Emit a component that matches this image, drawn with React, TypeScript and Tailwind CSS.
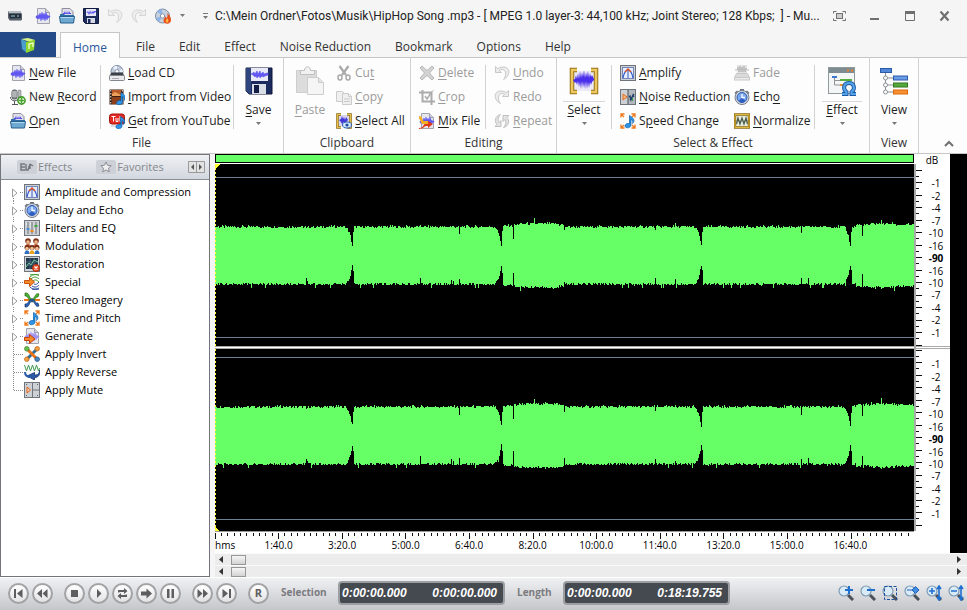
import { useState } from "react";
import type { ReactNode } from "react";
import clsx from "clsx";

type IconName = string;

const WAVE = "M1 8l3-1 1-2 1 2 1-3 1 3 1-2 1 2 1-3 1 3 2 1 1 0v1l-2 1-1 2-1-2-1 3-1-3-1 2-1-2-1 3-1-3-1 1-3-1z";

const Page = ({ wave = "#6058f0" }: { wave?: string }) => (
  <>
    <path d="M2.500.5h8l4 4v11h-12z" fill="#e6e6ee" stroke="#a2a2ae" />
    <path d="M10.500.5v4h4" fill="#cfcfda" stroke="#a2a2ae" />
    <path d={WAVE} fill={wave} stroke={wave} strokeWidth=".4" />
  </>
);

const Note = () => (
  <path
    d="M9.500 2.500v8.200c-2-.8-4.500.3-4.500 2.300 0 2.500 5.800 2.500 6-1V6.500c2 .7 2.200 2.200 1.500 4 3-3 1-5.500-3-8z"
    fill="#2d94e6"
    stroke="#0a5ca8"
    strokeWidth=".7"
  />
);

const Corners = () => (
  <path d="M1 4.500V1h3.500M1 1l3 3M11.500 1H15v3.500M15 1l-3 3M1 11.500V15h3.500M1 15l3-3M15 11.500V15h-3.500M15 15l-3-3" fill="none" stroke="#f07818" strokeWidth="1.300" />
);

const Frame = ({ children }: { children?: ReactNode }) => (
  <>
    <rect x=".5" y=".5" width="15" height="15" fill="#cdd1d6" stroke="#6f747c" />
    {children}
  </>
);

const ICONS: Record<IconName, ReactNode> = {
  drive: (
    <>
      <path d="M1 3h12l2 3v6l-12 1-2-3z" fill="#59616b" />
      <path d="M1 3h12l1 2H2z" fill="#b6bec6" />
      <path d="M2 6h12v4l-11 .5z" fill="#27303b" />
      <path d="M4 8h4M10 8h2" stroke="#8fd0e0" />
      <path d="M3 12.500h11" stroke="#9aa3ab" />
    </>
  ),
  newFile: <Page />,
  record: (
    <>
      <rect x="2" y="1" width="5" height="9" rx="2" fill="#8b8f92" stroke="#55595c" />
      <path d="M2 3h5M2 5h5M2 7h5" stroke="#d7d9da" />
      <path d="M.500 8c0 5 8 5 8 0M4.500 12v3M2 15.500h6" fill="none" stroke="#55595c" />
      <rect x="8" y="1" width="3" height="7" rx="1" fill="#b8bbbd" stroke="#77797b" strokeWidth=".6" />
      <circle cx="11.500" cy="11.500" r="3.600" fill="#fff" stroke="#3f9a24" strokeWidth="1.600" />
      <path d="M11.500 9v5M9 11.500h5" stroke="#4aa52c" strokeWidth="1.700" />
    </>
  ),
  open: (
    <>
      <path d="M3 .5h8l3 3v7H3z" fill="#dedee8" stroke="#8e8e9c" />
      <path d="M4 5h1l1-2 1 3 1-3 1 3 1-3 1 2h1v1H4z" fill="#4f46f0" />
      <path d="M1 6h4l1 1h9v4H1z" fill="#2f6fa6" />
      <path d="M.5 8.500h15l-1 6.500h-13z" fill="#6ea9d2" stroke="#255d8c" />
      <path d="M1.500 9.500h13" stroke="#b4daf0" />
    </>
  ),
  save: (
    <>
      <path d="M.500.500h15v15h-13l-2-2z" fill="#1d2c5e" stroke="#111a3c" />
      <rect x="3" y="1" width="10" height="7" fill="#e6e6f4" />
      <path d="M3 4h1l1-1 1 2 1-3 1 3 1-2 1 1 1-1h2v1l-2 1-1 1-1-1-1 1-1-1-1 2-1-2-2-1z" fill="#6058f0" />
      <rect x="4" y="10" width="8" height="5" fill="#d6dae4" />
      <rect x="5" y="11" width="2.500" height="4" fill="#1d2c5e" />
    </>
  ),
  undo: <path d="M1.500 1.500v6h6L5.300 5.300c4-2.300 7.700.7 5.700 6.700-.3 1-.8 1.800-1.500 2.500 7-3.500 7.500-13-1-12.500-2 .1-3.600.8-4.900 1.600z" fill="#ececec" stroke="#c3c3c3" strokeWidth=".9" />,
  redo: <path d="M14.500 1.500v6h-6l2.200-2.200C6.700 3 3 6 5 12c.3 1 .8 1.800 1.500 2.500C-.5 11-1 1.500 7.500 2c2 .1 3.600.8 4.900 1.600z" fill="#ececec" stroke="#c3c3c3" strokeWidth=".9" />,
  repeat: (
    <g fill="#e4e4e4" stroke="#b9b9b9" strokeWidth=".9">
      <path d="M6.500 1.500C.5 3 .5 9 3 11.500l-2 2h6v-6l-2 2C3.500 7 4 4.500 6.500 1.500z" />
      <path d="M9.500 14.500c6-1.500 6-7.500 3.500-10l2-2H9v6l2-2c1.500 2.500 1 5-1.500 8z" />
    </g>
  ),
  burn: (
    <>
      <circle cx="7.500" cy="8" r="7" fill="#c8d2de" stroke="#7e8da0" />
      <path d="M7.500 8L2 3.500A7 7 0 017 1zM7.500 8L4 14a7 7 0 01-3-4z" fill="#8fb4ea" />
      <circle cx="7.500" cy="8" r="2.200" fill="#fff" stroke="#8390a2" />
      <path d="M12 5c3 2 4 5 4 7 0 5-7.500 5-7.500.5 0-2 1.500-2 1.500-4 1 .5 1.500 1 1.500 2C12.500 9 13 7.500 12 5z" fill="#e8501c" />
      <path d="M12.300 10c1.500 2 1.500 4.500-.3 4.500-1.500 0-1.800-2 .3-4.500z" fill="#ffb545" />
    </>
  ),
  loadCd: (
    <>
      <circle cx="8" cy="6.500" r="6" fill="#c2cbdc" stroke="#7987a0" />
      <path d="M8 7L4 2.500A6 6 0 018 .8zM8 7l5-3a6 6 0 011 3z" fill="#e9f2ff" />
      <circle cx="8" cy="6.500" r="2" fill="#fff" stroke="#8793a8" />
      <path d="M2.500 7.500h11l2 3.500H.5z" fill="#3c4048" />
      <rect x=".5" y="10.500" width="15" height="5" rx="1" fill="#e9e9ec" stroke="#83878e" />
      <path d="M3 13.500h7" stroke="#a9acb2" />
    </>
  ),
  video: (
    <>
      <rect x=".5" y=".5" width="14" height="15" fill="#3a1e10" />
      <rect x="3" y="1" width="9" height="6" fill="#b85a28" />
      <rect x="3" y="8" width="9" height="7" fill="#8c3f1a" />
      <path d="M1.800 1v14M13.300 1v14" stroke="#eee" strokeDasharray="1.500 1.500" />
      <path d="M3 5l3-2 6 3v1H3z" fill="#eaa05a" />
      <g transform="translate(2.500 1)"><Note /></g>
    </>
  ),
  youtube: (
    <>
      <rect x=".5" y="1" width="15" height="10" rx="2.500" fill="#e02a22" stroke="#a81610" />
      <path d="M2.500 3.500h4M4.500 3.500v5M7 5v3.500h2V5M11 3v5.500h2V5.500h-2" fill="none" stroke="#fff" />
      <path d="M2 12h10v2H2z" fill="#dcdce6" />
      <g transform="translate(2 1)"><Note /></g>
    </>
  ),
  cut: (
    <g fill="none" stroke="#a9a9a9">
      <path d="M3.500 1L10 10M12.500 1L6 10" strokeWidth="2.200" />
      <ellipse cx="4" cy="12.500" rx="2" ry="2.500" strokeWidth="1.500" />
      <ellipse cx="12" cy="12.500" rx="2" ry="2.500" strokeWidth="1.500" />
    </g>
  ),
  copy: (
    <g fill="#efefef" stroke="#cbcbcb">
      <path d="M.5 2.500h6l3 3v7h-9z" />
      <path d="M6.500 4.500h6l3 3v8h-9zM12.500 4.500v3h3" />
      <path d="M8 10h6M8 12.500h6" />
    </g>
  ),
  selectAll: (
    <>
      <rect x="3" y="2" width="10" height="11" fill="#d5d5ee" />
      <path d="M5 1.500H1.500v13H5M11 1.500h3.500v13H11" fill="none" stroke="#8c6a14" strokeWidth="2.600" />
      <path d="M5 1.500H1.500v13H5M11 1.500h3.500v13H11" fill="none" stroke="#e6c04c" strokeWidth="1.200" />
      <path d="M3 7l2-1 1-3 1 3 1-2 1 3 1-3 2 3-2 2-1 2-1-2-2 2-1-2z" fill="#4336d8" />
      <ellipse cx="11" cy="12" rx="4.500" ry="3" fill="#d4e6ff" stroke="#2b5fae" />
      <circle cx="11" cy="12" r="1.600" fill="#1c4d9c" />
    </>
  ),
  del: (
    <path d="M3 1l5 4.500L13 1l2 2-4.500 5 4.500 5-2 2-5-4.500L3 15l-2-2 4.500-5L1 3z" fill="#d2d2d2" stroke="#b9b9b9" />
  ),
  crop: (
    <g fill="none" stroke="#ababab">
      <path d="M3.500 1v11.500H16M0 3.500h12.500V16" strokeWidth="2" />
      <path d="M6 7l2 3 4-6" strokeWidth="1.500" />
      <path d="M10 5l5-4" strokeWidth=".7" />
    </g>
  ),
  mix: (
    <>
      <Page />
      <path d="M0 3c4 0 3 5 5 5h4v3H4C1 11 2 6 0 6z" fill="#f4b020" />
      <path d="M0 15c5 0 4-4 6-4h3V8l5 3-5 4v-2H7c-2 0-2 3-7 3z" fill="#e03a1c" />
    </>
  ),
  amplify: (
    <Frame>
      <rect x="2.500" y="2.500" width="11" height="11" fill="#e5edff" stroke="#7285bc" />
      <path d="M3 13c1-5 3-8 5-8 3 0 4 3 5 8" fill="none" stroke="#2f55c8" strokeWidth="1.200" />
      <path d="M8 13V5" stroke="#3d5bb0" />
      <path d="M5 7l3-3 3 3" fill="none" stroke="#e0521c" strokeWidth="1.400" />
    </Frame>
  ),
  noise: (
    <Frame>
      <rect x="8" y="1" width="7" height="14" fill="#b3b8bf" />
      <path d="M8 1v14" stroke="#4b4f56" />
      <path d="M3 5l4 3-4 3z" fill="#f5ba80" stroke="#e26b1a" />
      <path d="M9 8l1-1 1 4 2-5 1 2M10 11l4-6" fill="none" stroke="#1b3a66" strokeWidth="1.200" />
      <path d="M12.500 9v3" stroke="#3aa23a" />
    </Frame>
  ),
  speed: (
    <>
      <Corners />
      <Note />
    </>
  ),
  fade: (
    <>
      <rect x="3" y="0" width="10" height="8" fill="#e3e3e3" />
      <path d="M1 5h2l1-3 1 5 1-6 1 6 1-5 1 5 1-6 1 6 1-4 1 2h2" fill="none" stroke="#bcbcbc" />
      <path d="M2.500 8.500h11l2 4H.5z" fill="#dadada" stroke="#c9c9c9" />
      <rect x=".5" y="12.500" width="15" height="2.500" fill="#ececec" stroke="#c9c9c9" />
    </>
  ),
  echo: (
    <>
      <rect x="6" y="0" width="4" height="2" fill="#70757d" />
      <path d="M1 4.500l2.500-2.500M15 4.500L12.500 2" stroke="#646b78" strokeWidth="1.500" />
      <circle cx="8" cy="8.500" r="7" fill="#d7dce4" stroke="#747b88" />
      <circle cx="8" cy="8.500" r="5" fill="#7aa8f0" stroke="#2c55ac" />
      <path d="M4.500 12a5 5 0 007 0L8 8.500z" fill="#2f5fc4" />
      <path d="M8 5v3.500h3" fill="none" stroke="#fff" strokeWidth="1.300" />
    </>
  ),
  normalize: (
    <>
      <path d="M1 1.500h14v13H1z" fill="#e9edda" stroke="#8c6a14" strokeWidth="2.400" />
      <path d="M1 1.500h14v13H1z" fill="none" stroke="#dfb93c" />
      <path d="M0 8h16" stroke="#8c6a14" strokeWidth=".5" />
      <path d="M2.500 11l1.500-6 2 6 2-6 2 6 2-6 1.500 6" fill="none" stroke="#465b54" strokeWidth="1.200" />
    </>
  ),
  filters: (
    <Frame>
      <path d="M4 2v12M8 2v12M12 2v12" stroke="#6b7078" />
      <rect x="2.500" y="8" width="3" height="2" fill="#4e8fd8" />
      <rect x="6.500" y="10" width="3" height="2" fill="#f08a1c" />
      <rect x="10.500" y="5" width="3" height="2" fill="#3fa63c" />
      <path d="M2 4h1M6 4h1M6 7h1M10 10h1" stroke="#fff" />
    </Frame>
  ),
  modulation: (
    <>
      {[3.500, 11.500].map((x) => (
        <g key={x}>
          <circle cx={x + 0.5} cy="3" r="2.800" fill="#7c3318" />
          <circle cx={x + 0.5} cy="4" r="1.800" fill="#f0b58a" />
          <path d={`M${x - 2.5} 9c0-4 6-4 6 0z`} fill="#c8542a" />
        </g>
      ))}
      {[3, 8, 13].map((x) => (
        <g key={x}>
          <circle cx={x} cy="9.500" r="2.500" fill="#6f2c12" />
          <circle cx={x} cy="10.500" r="1.700" fill="#f6c197" />
          <path d={`M${x - 2.5} 16c0-5 5-5 5 0z`} fill={x === 8 ? "#f0a21c" : "#2d6fbe"} />
        </g>
      ))}
    </>
  ),
  restoration: (
    <Frame>
      <rect x="2" y="2" width="12" height="11" fill="#24384c" />
      <path d="M2 11l3-4 2 2 3-5 4 2" fill="none" stroke="#6fd08a" />
      <path d="M2 6h12M2 9h12M6 2v11M10 2v11" stroke="#6e95b8" strokeWidth=".4" />
      <circle cx="12" cy="12" r="3.500" fill="#e8562a" stroke="#b22d0c" />
      <path d="M10.500 10.500l3 3M13.500 10.500l-3 3" stroke="#fff" strokeWidth="1.200" />
    </Frame>
  ),
  special: (
    <>
      <path d="M6 3c3-3 7-3 9-1M7 5c3-3 6-2 8 0M9 7c2-2 4-1 6 1M6 1c4-1 7-1 9 0" fill="none" stroke="#3f9a30" />
      <path d="M6 13c3 3 7 2 9 1M8 12c3 2 5 1 7-1M10 10c2 1 3 0 5-2M8 15c3 1 5 1 7 0" fill="none" stroke="#2b4a9c" />
      <path d="M.5 6.500h5V3.500L10.500 8l-5 4.500v-3h-5z" fill="#f58a2a" stroke="#c6500c" />
    </>
  ),
  stereo: (
    <>
      <path d="M0 8h16" stroke="#f07818" strokeWidth="2" />
      <path d="M1 1c5-1 4 6 7 6s3-7 7-5l-1 3c-3-1-3 5-6 5S4 3 1 4z" fill="#4db032" stroke="#226d12" strokeWidth=".7" />
      <path d="M1 15c5 1 4-6 7-6s3 7 7 5l-1-3c-3 1-3-4-6-4s-4 6-7 5z" fill="#2c62b4" stroke="#12366f" strokeWidth=".7" />
    </>
  ),
  generate: (
    <>
      <Page wave="#9f90f0" />
      <path d="M.5 9.500h5v-3l5.500 4.500-5.500 4.500v-3h-5z" fill="#f58a2a" stroke="#c6420c" />
    </>
  ),
  invert: (
    <>
      <path d="M3 13L13 3" stroke="#2d6e9c" strokeWidth="3" />
      <path d="M3 3l10 10" stroke="#e8741a" strokeWidth="3" />
      <circle cx="2.800" cy="2.800" r="2.300" fill="#6cc050" stroke="#35802a" strokeWidth=".7" />
      <circle cx="13.200" cy="2.800" r="2.300" fill="#f0a040" stroke="#c0600c" strokeWidth=".7" />
      <circle cx="2.800" cy="13.200" r="2.300" fill="#f0a040" stroke="#c0600c" strokeWidth=".7" />
      <circle cx="13.200" cy="13.200" r="2.300" fill="#4a88c0" stroke="#1c4d7c" strokeWidth=".7" />
    </>
  ),
  reverse: (
    <>
      <path d="M.5 1l2 6 2-6 2 6 2-6 2 6 2-6 2 6 1-3" fill="none" stroke="#3f9a50" />
      <path d="M15.500 6c0 4-2 5-5 5V8.500L3 12l7.500 4v-2.500c4 0 6-3 5-7.500z" fill="#2c5aa8" stroke="#14346e" strokeWidth=".8" />
      <path d="M1 8c0 3 2 5 6 5" fill="none" stroke="#2c5aa8" strokeWidth="2" />
    </>
  ),
  mute: (
    <Frame>
      <path d="M8.500 1v14M8.500 8H15" stroke="#6f747c" />
      <path d="M3 5l3.500 3L3 11z" fill="#f9d0ac" stroke="#e0601a" />
      <path d="M2 2.500h1M13 2.500h1M2 13.500h1M13 13.500h1" stroke="#5f646c" />
    </Frame>
  ),
};

function Icon({ name }: { name: IconName }) {
  return (
    <svg className="size-4 shrink-0" viewBox="0 0 16 16" aria-hidden="true">
      {ICONS[name]}
    </svg>
  );
}

const BIG_WAVE = "M4 15l2-1 1-4 1 4 1-6 1 6 1-8 1 7 1-6 1 5 1-7 1 8 1-6 1 5 1-6 1 7 1-5 1 4 1-2 2 4v1l-2 2-1 3-1-3-1 6-1-6-1 7-1-8-1 8-1-7-1 6-1-7-1 8-1-7-1 5-1-6-1 4-1-3-1 1z";

const BIG_ICONS: Record<string, ReactNode> = {
  save: (
    <>
      <path d="M2 3h26v26H5l-3-3z" fill="#1b2b60" stroke="#0e1738" />
      <path d="M2 3h5v26H5l-3-3z" fill="#2f457e" />
      <rect x="7" y="3" width="17" height="13" fill="#e8e8f6" />
      <path d="M7 9l2-1 1-1 1 2 2-3 1 3 2-3 1 3 2-2 1 2 3-1h1v2l-3 1-2 1-1-1-2 2-1-2-2 2-1-2-1 1-2-2-2-1z" fill="#6058f0" stroke="#6058f0" strokeWidth=".6" />
      <rect x="8" y="19" width="14" height="10" fill="#d9dde6" />
      <rect x="10" y="20" width="5" height="8" fill="#141e44" />
    </>
  ),
  paste: (
    <g stroke="#cdcdcd">
      <path d="M1.500 5.500h20v22h-20z" fill="#dcdcdc" />
      <path d="M5.500 9.500v-4h4c0-5 6-5 6 0h4v4z" fill="#f1f1f1" stroke="#c0c0c0" />
      <path d="M12.500 12.500h11l5 5v12h-16z" fill="#f5f5f5" />
      <path d="M23.500 12.500v5h5" fill="#e2e2e2" />
    </g>
  ),
  select: (
    <>
      <rect x="5" y="6" width="20" height="20" fill="#eceaf6" />
      <path d="M8 5H3v22h5M22 5h5v22h-5" fill="none" stroke="#98721a" strokeWidth="4.500" />
      <path d="M8 5H3v22h5M22 5h5v22h-5" fill="none" stroke="#edc860" strokeWidth="2.500" />
      <path d={BIG_WAVE} fill="#4a2eec" />
    </>
  ),
  effect: (
    <>
      <rect x="1.500" y="2.500" width="26" height="26" fill="#f4f6f6" stroke="#8e9a9c" />
      <path d="M2 3h25v5H2z" fill="#7d8c90" />
      <path d="M20 4.500h2v2h-2zM24 4.500h2v2h-2z" fill="#f08030" />
      <rect x="5" y="11" width="5" height="2" fill="#3c78d0" />
      <path d="M7.500 13v7H13M7.500 15.500H13" fill="none" stroke="#8d9496" />
      <path d="M13 14h12v2H13z" fill="#58ae3e" />
      <path d="M13 19h5v2h-5z" fill="#ef9030" />
      <path d="M15 29h4.500v-2c-4-3-3-9 2.500-9s6.500 6 2.500 9v2H29" fill="none" stroke="#1d5aa8" strokeWidth="4" />
      <path d="M15 29h4.500v-2c-4-3-3-9 2.500-9s6.500 6 2.500 9v2H29" fill="none" stroke="#55a4e8" strokeWidth="2" />
    </>
  ),
  view: (
    <>
      <path d="M6.500 8v19M6.500 13H14M6.500 20H14M6.500 27H14" fill="none" stroke="#8b9094" />
      <rect x="1.500" y="3.500" width="11" height="4" fill="#5187d8" stroke="#2c5ca8" />
      <rect x="14.500" y="11" width="14" height="4" fill="#6a9ce8" stroke="#2c5ca8" />
      <rect x="14.500" y="18" width="14" height="4" fill="#57a83c" stroke="#2f761c" />
      <rect x="14.500" y="25" width="14" height="4" fill="#f89030" stroke="#d8680c" />
      {[13, 20, 27].map((y) => (
        <circle key={y} cx="6.500" cy={y} r="2" fill="#fff" stroke="#8b9094" />
      ))}
    </>
  ),
};

// "&" marks the access key that follows it
function Caption({ text }: { text: string }) {
  const at = text.indexOf("&");
  if (at < 0) return <span>{text}</span>;
  return (
    <span className="whitespace-pre">
      {text.slice(0, at)}
      <span className="underline underline-offset-2">{text[at + 1]}</span>
      {text.slice(at + 2)}
    </span>
  );
}

interface Command {
  icon: IconName;
  text: string;
  disabled?: boolean;
}

function Commands({ items, className }: { items: Command[]; className: string }) {
  return (
    <div className={clsx("flex flex-col shrink-0", className)}>
      {items.map((c) => (
        <button
          key={c.text}
          disabled={c.disabled}
          className={clsx(
            "flex h-6 items-center gap-[3px] whitespace-nowrap",
            c.disabled ? "text-[#9b9b9b]" : "text-[#1e1e1e]"
          )}
        >
          <Icon name={c.icon} />
          <Caption text={c.text} />
        </button>
      ))}
    </div>
  );
}

interface BigProps {
  icon: string;
  text: string;
  disabled?: boolean;
  menu?: boolean;
  split?: boolean;
  className: string;
}

function BigCommand({ icon, text, disabled, menu, split, className }: BigProps) {
  return (
    <button
      disabled={disabled}
      className={clsx("flex shrink-0 flex-col items-center", disabled ? "text-[#9b9b9b]" : "text-[#1e1e1e]", className)}
    >
      <svg className="mt-1 h-8 w-[30px]" viewBox="0 0 30 32" aria-hidden="true">
        {BIG_ICONS[icon]}
      </svg>
      <span className={clsx("mt-1 border-t px-1 leading-4", split ? "border-[#d8d8d8]" : "border-transparent")}>
        <Caption text={text} />
      </span>
      {menu && <Caret />}
    </button>
  );
}

function Caret() {
  return (
    <svg className="mt-1 h-1 w-[7px]" viewBox="0 0 7 4" aria-hidden="true">
      <path d="M1 0h5L3.500 3z" fill="#777" />
    </svg>
  );
}

const Divider = () => <div className="my-1 w-px shrink-0 bg-[#d2d2d2]" />;

function Group({ title, children }: { title: string; children: ReactNode }) {
  return (
    <section className="flex shrink-0 flex-col border-r border-[#d2d2d2] pt-[3px]">
      <div className="flex h-[72px] shrink-0">{children}</div>
      <h2 className="text-center leading-5 text-[#333]">{title}</h2>
    </section>
  );
}

const TABS = ["File", "Edit", "Effect", "Noise Reduction", "Bookmark", "Options", "Help"];

function TitleBar() {
  return (
    <header className="flex h-8 shrink-0 items-center pr-[5px]">
      <div className="flex shrink-0 items-center pl-[7px]">
        <Icon name="drive" />
        <div className="ml-3 flex gap-2">
          {["newFile", "open", "save", "undo", "redo", "burn"].map((name) => (
            <button key={name} aria-label={name} className={clsx((name === "undo" || name === "redo") && "opacity-70")}>
              <Icon name={name} />
            </button>
          ))}
        </div>
        <button aria-label="Burn options" className="ml-2 pb-1">
          <Caret />
        </button>
        <button aria-label="Customize toolbar" className="ml-4">
          <svg className="h-2 w-[7px]" viewBox="0 0 7 8">
            <path d="M1 1.500h5" stroke="#777" />
            <path d="M1 4h5L3.500 7z" fill="#777" />
          </svg>
        </button>
      </div>
      <h1 className="ml-1.5 min-w-0 flex-1 overflow-hidden font-['Roboto','Open_Sans',sans-serif] whitespace-pre text-[#222]">
        {"C:\\Mein Ordner\\Fotos\\Musik\\HipHop Song .mp3 - [ MPEG 1.0 layer-3: 44,100 kHz; Joint Stereo; 128 Kbps;  ] - Mu..."}
      </h1>
      <div className="flex shrink-0">
        <WindowButton label="Full screen">
          <path d="M.5 3.500v-2h3M9.500 1.500h3v2M12.500 8.500v2h-3M3.500 10.500h-3v-2" />
          <rect x="3.500" y="3.500" width="6" height="5" fill="#ccc" />
        </WindowButton>
        <WindowButton label="Minimize">
          <path d="M2 9h9" strokeWidth="2" />
        </WindowButton>
        <WindowButton label="Maximize">
          <path d="M2.500 2.500h9v8h-9z" />
          <path d="M2 2.500h10" strokeWidth="3" />
        </WindowButton>
        <WindowButton label="Close">
          <path d="M2.500 1.500l8 9M10.500 1.500l-8 9" strokeWidth="2.200" />
        </WindowButton>
      </div>
    </header>
  );
}

function WindowButton({ label, children }: { label: string; children: ReactNode }) {
  return (
    <button aria-label={label} className="flex w-[35px] justify-center">
      <svg className="h-3 w-[13px]" viewBox="0 0 13 12" fill="none" stroke="#6f6f6f">
        {children}
      </svg>
    </button>
  );
}

function Ribbon() {
  return (
    <div className="flex h-24 shrink-0 overflow-hidden border-b border-[#c6c6c6] bg-[#fdfdfd]">
      <Group title="File">
        <Commands
          className="w-[100px] pl-2.5"
          items={[
            { icon: "newFile", text: "&New File" },
            { icon: "record", text: "New &Record" },
            { icon: "open", text: "&Open" },
          ]}
        />
        <Divider />
        <Commands
          className="w-[132px] pl-2"
          items={[
            { icon: "loadCd", text: "&Load CD" },
            { icon: "video", text: "&Import from Video" },
            { icon: "youtube", text: "&Get from YouTube" },
          ]}
        />
        <Divider />
        <BigCommand className="w-[49px]" icon="save" text="&Save" menu />
      </Group>
      <Group title="Clipboard">
        <BigCommand className="w-[52px]" icon="paste" text="&Paste" disabled />
        <Commands
          className="w-[74px]"
          items={[
            { icon: "cut", text: "Cu&t", disabled: true },
            { icon: "copy", text: "&Copy", disabled: true },
            { icon: "selectAll", text: "&Select All" },
          ]}
        />
      </Group>
      <Group title="Editing">
        <Commands
          className="w-[74px] pl-2"
          items={[
            { icon: "del", text: "&Delete", disabled: true },
            { icon: "crop", text: "&Crop", disabled: true },
            { icon: "mix", text: "&Mix File" },
          ]}
        />
        <Divider />
        <Commands
          className="w-[70px] pl-2"
          items={[
            { icon: "undo", text: "&Undo", disabled: true },
            { icon: "redo", text: "Redo", disabled: true },
            { icon: "repeat", text: "&Repeat", disabled: true },
          ]}
        />
      </Group>
      <Group title="Select & Effect">
        <BigCommand className="w-[54px]" icon="select" text="&Select" menu split />
        <Divider />
        <Commands
          className="w-[122px] pl-2"
          items={[
            { icon: "amplify", text: "&Amplify" },
            { icon: "noise", text: "&Noise Reduction" },
            { icon: "speed", text: "S&peed Change" },
          ]}
        />
        <Commands
          className="w-20"
          items={[
            { icon: "fade", text: "Fade", disabled: true },
            { icon: "echo", text: "Ech&o" },
            { icon: "normalize", text: "&Normalize" },
          ]}
        />
        <Divider />
        <BigCommand className="w-[54px]" icon="effect" text="&Effect" menu split />
      </Group>
      <Group title="View">
        <BigCommand className="w-12" icon="view" text="View" menu />
      </Group>
      <button aria-label="Collapse ribbon" className="mr-3 mb-1.5 ml-auto self-end">
        <svg className="h-2 w-3" viewBox="0 0 12 8" fill="none" stroke="#6f6f6f" strokeWidth="2">
          <path d="M2 7l4-4 4 4" />
        </svg>
      </button>
    </div>
  );
}

const TREE = [
  { icon: "amplify", text: "Amplitude and Compression", open: true },
  { icon: "echo", text: "Delay and Echo", open: true },
  { icon: "filters", text: "Filters and EQ", open: true },
  { icon: "modulation", text: "Modulation", open: true },
  { icon: "restoration", text: "Restoration", open: true },
  { icon: "special", text: "Special", open: true },
  { icon: "stereo", text: "Stereo Imagery", open: true },
  { icon: "speed", text: "Time and Pitch", open: true },
  { icon: "generate", text: "Generate", open: true },
  { icon: "invert", text: "Apply Invert", open: false },
  { icon: "reverse", text: "Apply Reverse", open: false },
  { icon: "mute", text: "Apply Mute", open: false },
];

function Sidebar() {
  return (
    <aside className="flex w-[210px] shrink-0 flex-col border border-[#74747a] bg-white text-[11px]">
      <div className="flex h-[25px] shrink-0 items-center border-b border-[#8a8d96] bg-gradient-to-b from-[#eef0f3] to-[#d3d7df] pr-1 pl-4 text-[#85878c]">
        <button className="flex items-center gap-px">
          <svg className="h-3.5 w-5 rounded-xs bg-[#cdd0d6]" viewBox="0 0 20 14" fill="none" stroke="#74777d" strokeWidth="1.500">
            <path d="M8 4H4v6h4M4 7h4M9 4v6h2l2-6v5M13 4l3 2" />
          </svg>
          Effects
        </button>
        <button className="ml-6 flex items-center gap-px">
          <svg className="h-3.5 w-5 rounded-xs bg-[#cdd0d6]" viewBox="0 0 20 14">
            <path d="M10 2l1.600 3.300 3.600.4-2.700 2.500.8 3.600L10 10l-3.300 1.800.8-3.600-2.700-2.500 3.600-.4z" fill="#eee" stroke="#8b8e94" />
          </svg>
          Favorites
        </button>
        <button aria-label="Scroll tabs" className="ml-auto">
          <svg className="h-3 w-[17px]" viewBox="0 0 17 12">
            <path d="M.5.5h16v11H.5zM8.500 0v12" fill="#e3e3e3" stroke="#9a9a9a" />
            <path d="M6 3v6L3 6zM11 3v6l3-3z" fill="#555" />
          </svg>
        </button>
      </div>
      <ul className="pt-[3px] text-black">
        {TREE.map((node, i) => (
          <li key={node.text}>
            <button className="flex h-[18px] w-full items-center pl-[9px] whitespace-nowrap">
              <svg className="h-[18px] w-3.5 shrink-0" viewBox="0 0 14 18" aria-hidden="true">
                <path
                  d={`M3.500 ${i === 0 ? 9 : 0}V${i === TREE.length - 1 ? 9 : 18}M4 9.500h10`}
                  stroke="#8a8a8a"
                  strokeDasharray="1 1"
                />
                {node.open && (
                  <>
                    <path d="M1 4h9v11H1z" fill="#fff" />
                    <path d="M2.500 6v8L7 10z" fill="#fff" stroke="#9c9c9c" />
                  </>
                )}
              </svg>
              <Icon name={node.icon} />
              <span className="ml-[5px]">{node.text}</span>
            </button>
          </li>
        ))}
      </ul>
    </aside>
  );
}

const COLS = 699;
const FADES = [137, 286, 486, 635];
// column, cut from the upper edge, cut from the lower edge
const DROPS: [number, number, number][] = [
  [91, 2, 5],
  [92, 1, 3],
  [205, 0, 7],
  [236, 0, 5],
  [238, 0, 4],
  [244, 8, 5],
  [298, 13, 13],
  [319, -5, 0],
  [349, 4, 6],
  [440, 4, 5],
  [460, -3, 4],
  [586, 8, 6],
  [593, 0, 7],
  [647, 12, 11],
  [666, -5, -3],
];

function noise(n: number) {
  const v = Math.sin(n * 12.9898) * 43758.5453;
  return v - Math.floor(v);
}

function swellAt(x: number) {
  if (x > 298 && x < 349) return 2 + 1.5 * Math.sin(((x - 298) / 51) * Math.PI);
  if (x > 286 && x <= 298) return 1;
  if (x > 640) return x > 655 && x < 680 ? 3 : 2;
  return 0;
}

// one step per column: upper edge left to right, lower edge back again
function wavePath(seed: number) {
  const top: number[] = [];
  const bottom: number[] = [];
  for (let x = 0; x < COLS; x++) {
    const swell = swellAt(x);
    const a = noise(x + seed);
    const b = noise(x * 1.7 + seed + 90);
    let up = 28 + swell + Math.round(a * 2.4) + (a > 0.95 ? 1 : 0);
    let down = 27 + swell + Math.round(b * 2.6) + (b > 0.97 ? 2 : 0);
    for (const f of FADES) {
      const d = f - x;
      if (d >= 0 && d < 7) {
        const cut = [19, 14, 9, 6, 4, 2, 1][d];
        up -= cut;
        down -= cut;
      } else if (d === -1) {
        up -= 6;
        down -= 14;
      }
    }
    for (const [at, u, l] of DROPS) {
      if (at === x) {
        up -= u;
        down -= l;
      }
    }
    top.push(Math.round(92 - up));
    bottom.push(Math.round(92 + down));
  }
  let d = `M0 ${top[0]}`;
  top.forEach((y, x) => (d += `V${y}H${x + 1}`));
  for (let x = COLS - 1; x >= 0; x--) d += `V${bottom[x]}H${x}`;
  return d + "Z";
}

const CHANNELS = [wavePath(3), wavePath(57)];
const DB = ["-1", "-2", "-4", "-7", "-10", "-16", "-90", "-16", "-10", "-7", "-4", "-2", "-1"];
const TIMES = ["1:40.0", "3:20.0", "5:00.0", "6:40.0", "8:20.0", "10:00.0", "11:40.0", "13:20.0", "15:00.0", "16:40.0"];

function Channel({ path, flip }: { path: string; flip?: boolean }) {
  return (
    <svg className="min-h-0 w-full flex-1 bg-black" viewBox="0 0 699 182" preserveAspectRatio="none" shapeRendering="crispEdges">
      <path d={flip ? "M0 8.500h699M0 170.500h699" : "M0 13.500h699M0 173.500h699"} stroke="#6c7f92" />
      <path d={path} fill="#66ff66" transform={flip ? "translate(0 -5)" : undefined} />
      <path d="M.5 0v182" stroke="#ffff30" strokeDasharray="2 2" />
      <path d={flip ? "M0 178v4h5z" : "M0 0h5l-5 5z"} fill="#ffff30" />
    </svg>
  );
}

function DbScale({ second }: { second?: boolean }) {
  return (
    <div className="flex min-h-0 flex-1">
      <svg className="h-full w-2" viewBox="0 0 8 182" preserveAspectRatio="none" shapeRendering="crispEdges" stroke="#111">
        {Array.from({ length: 29 }, (_, i) => {
          const y = Math.floor((second ? 1 : 6) + i * 6.25) + 0.5;
          return <path key={i} d={`M0 ${y}h${i % 2 ? 3 : 6}`} />;
        })}
      </svg>
      <div className={clsx("flex min-h-0 w-6 flex-col text-center text-[10px] leading-3", second ? "pt-[9px] pb-[11px]" : "pt-[13px] pb-[7px]")}>
        {DB.map((v, i) => (
          <span key={i} className={clsx("flex min-h-0 flex-1 items-center justify-center", v === "-90" && "font-bold")}>
            {v}
          </span>
        ))}
      </div>
    </div>
  );
}

function Ticks() {
  return (
    <svg className="h-[7px] w-full" viewBox="0 0 699 7" preserveAspectRatio="none" shapeRendering="crispEdges" stroke="#111">
      {Array.from({ length: 110 }, (_, i) => (
        <path key={i} d={`M${Math.floor(i * 6.36) + 0.5} 1v${i % 10 ? 3 : 6}`} />
      ))}
    </svg>
  );
}

function ScrollRow({ label }: { label: string }) {
  return (
    <div role="scrollbar" aria-label={label} aria-controls="wave" aria-valuenow={0} className="flex h-3 items-center border-t border-[#fafafa] bg-[#ececec] pr-1.5 pl-1">
      <svg className="h-[7px] w-1" viewBox="0 0 4 7">
        <path d="M4 0v7L0 3.500z" fill="#333" />
      </svg>
      <div className="ml-2 h-2.5 w-[15px] border border-[#979797] bg-gradient-to-b from-[#f6f6f6] to-[#d3d3d3]" />
      <svg className="ml-auto h-[7px] w-1" viewBox="0 0 4 7">
        <path d="M0 0v7l4-3.500z" fill="#333" />
      </svg>
    </div>
  );
}

function Editor() {
  return (
    <main className="flex min-w-0 flex-1 flex-col pl-[5px]">
      <div className="flex min-h-0 flex-1 bg-white">
        <div className="flex min-w-0 flex-1 flex-col" id="wave">
          <div className="h-[9px] shrink-0 border border-black bg-[#66ff66]" />
          <div className="h-px shrink-0" />
          <Channel path={CHANNELS[0]} />
          <div className="h-[3px] shrink-0 border-y border-[#aaa] bg-white" />
          <Channel path={CHANNELS[1]} flip />
          <div className="h-[22px] shrink-0 border-t border-[#999] text-[10px] leading-3 text-black">
            <Ticks />
            <div className="flex">
              <span className="w-[calc(100%/22)]">hms</span>
              {TIMES.map((t) => (
                <span key={t} className="w-[calc(100%/11)] text-center">
                  {t}
                </span>
              ))}
            </div>
          </div>
        </div>
        <div className="flex w-9 shrink-0 flex-col text-black">
          <div className="h-2.5 shrink-0 text-center text-[10px] leading-3">dB</div>
          <div className="flex min-h-0 flex-1 flex-col border-l-2 border-[#aaa]">
            <DbScale />
            <div className="h-[3px] shrink-0 border-y border-[#aaa]" />
            <DbScale second />
          </div>
          <div className="h-[22px] shrink-0" />
        </div>
        <div className="w-[17px] shrink-0 bg-black" />
      </div>
      <div className="shrink-0">
        <ScrollRow label="Scroll" />
        <ScrollRow label="Zoom" />
      </div>
    </main>
  );
}

const TRANSPORT = [
  { label: "Go to start", d: "M6 6h2v9H6zM14.500 6v9L9 10.500z", gap: "" },
  { label: "Rewind", d: "M10 6v9l-5-4.500zM15.500 6v9l-5-4.500z", gap: "ml-[3px]" },
  { label: "Stop", d: "M7 7h7v7H7z", gap: "ml-[11px]" },
  { label: "Play", d: "M9 6v9l4.500-4.500z", gap: "ml-[3px]" },
  { label: "Loop", d: "M6 9.500V7h6V5l3.500 3L12 11V9H7.500v.5zM15 11.500V14H9v2l-3.500-3L9 10v2h4.500v-.5z", gap: "ml-[3px]" },
  { label: "Play selection", d: "M5 8.500h5.500V5.500l5.500 5-5.500 5v-3H5z", gap: "ml-[3px]" },
  { label: "Pause", d: "M7 6h2.500v9H7zM11.500 6H14v9h-2.500z", gap: "ml-[3px]" },
  { label: "Forward", d: "M5.500 6v9l5-4.500zM11 6v9l5-4.500z", gap: "ml-[11px]" },
  { label: "Go to end", d: "M6.500 6v9l5.500-4.500zM13 6h2v9h-2z", gap: "ml-[3px]" },
];

const RING = "flex size-[21px] shrink-0 items-center justify-center rounded-full border-2 border-[#a3a3a5] bg-gradient-to-b from-white to-[#e2e2e4] text-[#5d5d60]";

const LENSES = [
  { label: "Zoom in", extra: <path d="M11 1v8M7 5h8" stroke="#1f6fd0" strokeWidth="2" /> },
  { label: "Zoom out", extra: <path d="M7 5h8" stroke="#1f6fd0" strokeWidth="2" /> },
  { label: "Zoom selection", extra: <path d="M2.500 1.500h12v13h-12z" fill="none" stroke="#1f4f9c" strokeDasharray="3 1.500" /> },
  { label: "Zoom full", extra: <path d="M11.500 1.500L15 5l-3.500 3.500L8 5zM3 5h5" fill="#3f8ee0" stroke="#1f5fb8" /> },
  { label: "Zoom in vertically", extra: <path d="M3 6h6M6 3v6M13 2v12M11 4l2-3 2 3M11 12l2 3 2-3" fill="none" stroke="#1f6fd0" strokeWidth="1.600" /> },
  { label: "Zoom out vertically", extra: <path d="M3 6h6M13 2v12M11 4l2-3 2 3M11 12l2 3 2-3" fill="none" stroke="#1f6fd0" strokeWidth="1.600" /> },
];

function Lcd({ values, label }: { values: string[]; label: string }) {
  return (
    <output
      aria-label={label}
      className="flex h-6 w-[167px] shrink-0 items-center justify-between rounded-sm border-2 border-[#9c9ea2] bg-[#454a51] pr-1.5 pl-0.5 font-['Liberation_Sans',sans-serif] text-xs font-bold text-white italic"
    >
      {values.map((v, i) => (
        <span key={i}>{v}</span>
      ))}
    </output>
  );
}

function StatusBar() {
  return (
    <footer className="flex h-[33px] shrink-0 items-center border-t border-white bg-gradient-to-b from-[#f0f1f3] to-[#c4c6ca] pr-[3px] pb-0.5 pl-2 text-[10px] font-bold text-[#7b7b7f]">
      {TRANSPORT.map((b) => (
        <button key={b.label} aria-label={b.label} className={clsx(RING, b.gap)}>
          <svg className="size-[21px] shrink-0" viewBox="0 0 21 21" fill="currentColor">
            <path d={b.d} />
          </svg>
        </button>
      ))}
      <button className={clsx(RING, "ml-[11px] text-[11px]")}>R</button>
      <span className="ml-3 w-[57px]">Selection</span>
      <Lcd label="Selection" values={["0:00:00.000", "0:00:00.000"]} />
      <span className="ml-3 w-[46px]">Length</span>
      <Lcd label="Length" values={["0:00:00.000", "0:18:19.755"]} />
      <div className="ml-auto flex gap-1.5">
        {LENSES.map((l) => (
          <button key={l.label} aria-label={l.label}>
            <svg className="size-4" viewBox="0 0 16 16">
              <path d="M10 10l5 5" stroke="#4a4f58" strokeWidth="3" />
              <circle cx="6" cy="6" r="5" fill="#d9ebf7" stroke="#7d9bb5" strokeWidth="1.200" />
              {l.extra}
            </svg>
          </button>
        ))}
      </div>
    </footer>
  );
}

export default function App() {
  const [tab, setTab] = useState("Home");

  return (
    <div className="flex h-screen flex-col overflow-hidden bg-[#f5f5f5] font-['Open_Sans','Noto_Sans',sans-serif] text-xs">
      <TitleBar />
      <nav className="flex h-[26px] shrink-0 border-b border-[#c6c6c6]">
        <button aria-label="Application menu" className="mr-1 flex w-14 items-center justify-center bg-[#244a88]">
          <svg className="h-4 w-4" viewBox="0 0 16 16">
            <path d="M1 2l7-1 7 2-5 2z" fill="#d8f28a" />
            <path d="M1 2l6 3v11l-5-4z" fill="#4aa0c8" />
            <path d="M6 5l9-2-1 10-8 3z" fill="#8fd62a" />
            <path d="M9 12V7l4-1v4" fill="none" stroke="#f4ffd0" strokeWidth="1.300" />
          </svg>
        </button>
        {["Home", ...TABS].map((t) => (
          <button
            key={t}
            onClick={() => setTab(t)}
            className={clsx(
              "px-3 pt-1 whitespace-nowrap",
              t === tab ? "mr-1 -mb-px border border-b-0 border-[#c6c6c6] bg-[#fdfdfd] text-[#2b579a]" : "text-[#333]"
            )}
          >
            {t}
          </button>
        ))}
      </nav>
      <Ribbon />
      <div className="flex min-h-0 flex-1">
        <Sidebar />
        <Editor />
      </div>
      <StatusBar />
    </div>
  );
}
